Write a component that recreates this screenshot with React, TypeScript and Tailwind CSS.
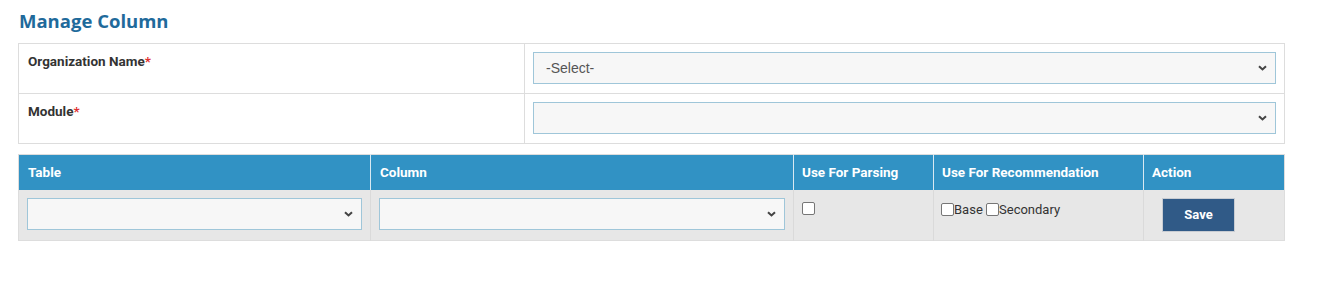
const Chevron = () => (
  <svg
    className="pointer-events-none absolute right-[9px] top-1/2 -translate-y-1/2"
    width="9"
    height="6"
    viewBox="0 0 9 6"
  >
    <path d="M1 1.2 L4.5 4.5 L8 1.2" fill="none" stroke="#444" strokeWidth="2" />
  </svg>
)

function Select({ value, className = "" }: { value?: string; className?: string }) {
  return (
    <div className={"relative " + className}>
      <select
        defaultValue=""
        className="h-[32px] w-full appearance-none border border-[#9fc6d9] bg-[#f7f7f7] pl-[12px] pr-[28px] text-[14px] text-[#555] outline-none"
        style={{ fontFamily: "'Liberation Sans', Arial, sans-serif" }}
      >
        <option value="">{value ?? ""}</option>
      </select>
      <Chevron />
    </div>
  )
}

const Check = ({ className = "" }: { className?: string }) => (
  <span
    className={
      "inline-block h-[13px] w-[13px] rounded-[2px] border border-[#767676] bg-white align-middle " +
      className
    }
  />
)

export default function App() {
  return (
    <div
      className="h-[302px] w-[1320px] bg-white pl-[18px] pt-[9px]"
      style={{ fontFamily: "Roboto, 'Liberation Sans', Arial, sans-serif" }}
    >
      <h1
        className="mb-[11px] ml-[1px] text-[18.5px] font-bold leading-[23px] text-[#1f6a9b]"
        style={{ fontFamily: "'Open Sans', sans-serif" }}
      >
        Manage Column
      </h1>

      <table className="w-[1267px] table-fixed border-collapse border border-[#dddddd]">
        <colgroup>
          <col className="w-[506px]" />
          <col />
        </colgroup>
        <tbody>
          <tr className="h-[50px]">
            <td className="border border-[#dddddd] px-[9px] pt-[7px] align-top text-[13.5px] font-bold text-[#333]">
              Organization Name<span className="text-[#e03030]">*</span>
            </td>
            <td className="border border-[#dddddd] px-[8px] py-[8px] align-top">
              <Select value="-Select-" />
            </td>
          </tr>
          <tr className="h-[50px]">
            <td className="border border-[#dddddd] px-[9px] pt-[7px] align-top text-[13.5px] font-bold text-[#333]">
              Module<span className="text-[#e03030]">*</span>
            </td>
            <td className="border border-[#dddddd] px-[8px] py-[8px] align-top">
              <Select />
            </td>
          </tr>
        </tbody>
      </table>

      <table className="mt-[10px] w-[1267px] table-fixed border-collapse border border-[#dddddd]">
        <colgroup>
          <col className="w-[352px]" />
          <col className="w-[423px]" />
          <col className="w-[140px]" />
          <col className="w-[210px]" />
          <col />
        </colgroup>
        <thead>
          <tr className="h-[35px] bg-[#3192c4] text-left text-[13.5px] font-bold text-white">
            <th className="border-r border-[#d9e9f2] px-[9px] pb-[1px] font-bold">Table</th>
            <th className="border-r border-[#d9e9f2] px-[9px] pb-[1px] font-bold">Column</th>
            <th className="border-r border-[#d9e9f2] px-[8px] pb-[1px] font-bold">Use For Parsing</th>
            <th className="border-r border-[#d9e9f2] px-[8px] pb-[1px] font-bold">Use For Recommendation</th>
            <th className="px-[8px] pb-[1px] font-bold">Action</th>
          </tr>
        </thead>
        <tbody>
          <tr className="h-[51px] bg-[#e7e7e7]">
            <td className="border-r border-[#dadada] px-[8px] pt-[8px] pb-[10px] align-top">
              <Select />
            </td>
            <td className="border-r border-[#dadada] px-[8px] pt-[8px] pb-[10px] align-top">
              <Select />
            </td>
            <td className="border-r border-[#dadada] px-[8px] pt-[10px] align-top leading-none">
              <Check />
            </td>
            <td className="border-r border-[#dadada] px-[7px] pt-[13px] align-top text-[13px] leading-[13px] text-[#333]">
              <label className="inline-flex items-center">
                <Check />
                Base
              </label>{" "}
              <label className="inline-flex items-center">
                <Check />
                Secondary
              </label>
            </td>
            <td className="px-[18px] pt-[8px] pb-[8px] align-top">
              <button className="h-[34px] w-[73px] border border-[#c8ccd2] bg-[#305a87] text-[13px] font-bold text-white">
                Save
              </button>
            </td>
          </tr>
        </tbody>
      </table>
    </div>
  )
}
